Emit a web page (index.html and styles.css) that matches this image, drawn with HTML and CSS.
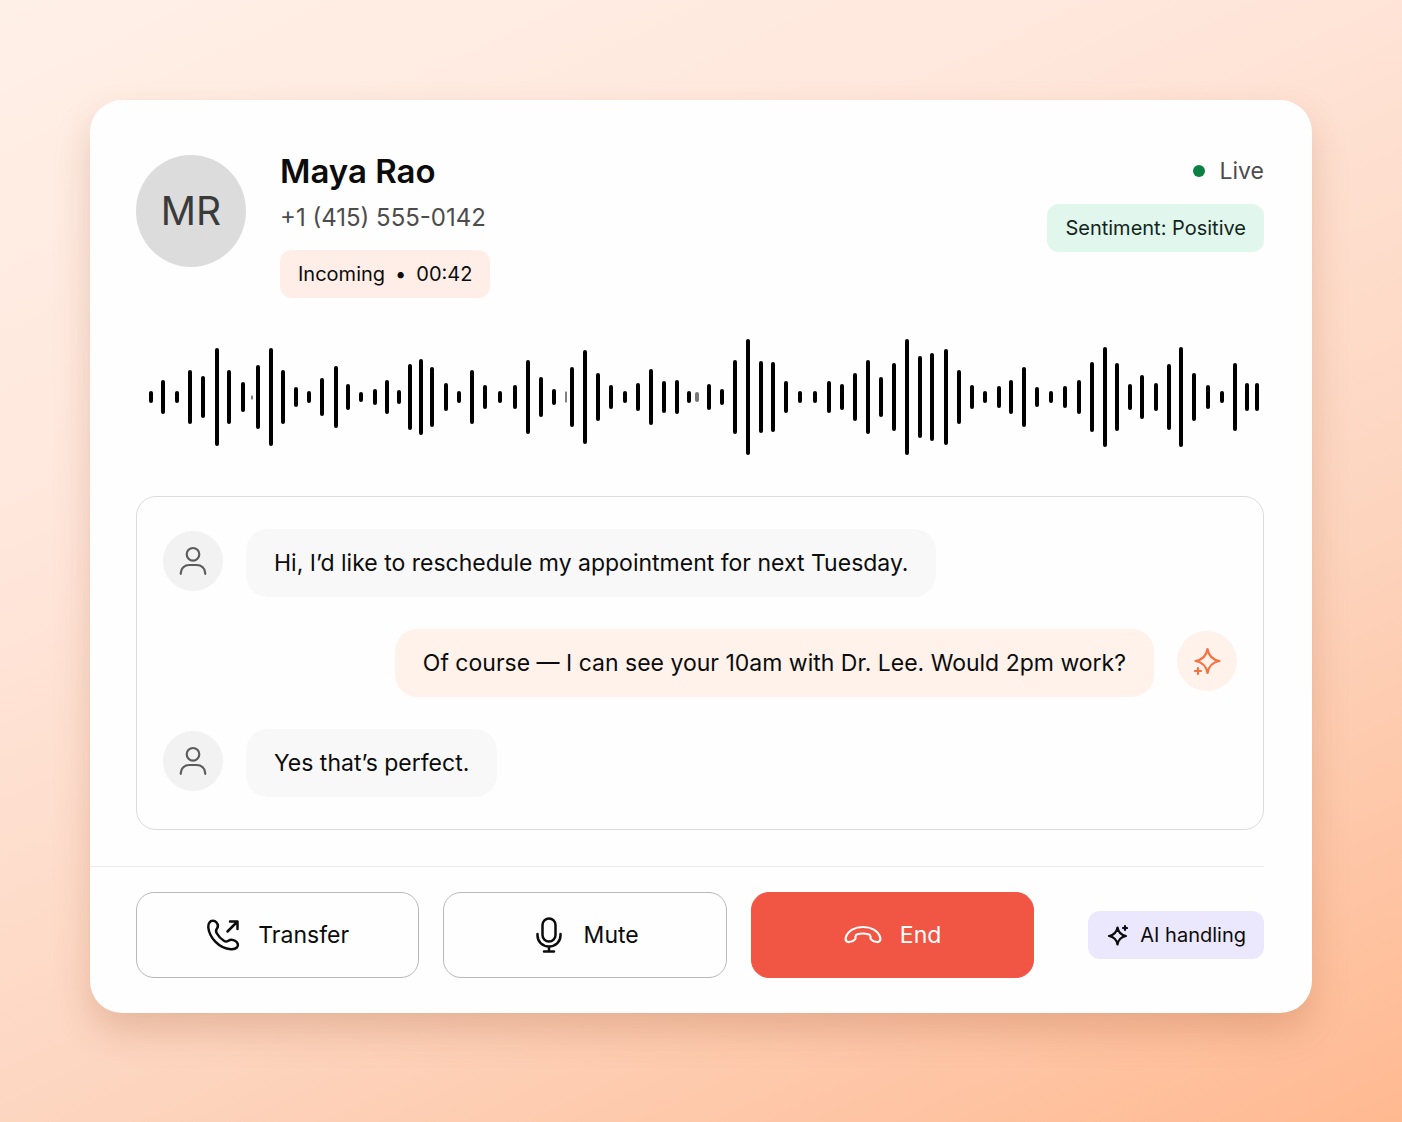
FILE: index.html
```html
<!DOCTYPE html>
<html lang="en">
<head>
    <meta charset="UTF-8">
    <meta name="viewport" content="width=device-width, initial-scale=1.0">
    <title>Call with Maya Rao</title>
    <link rel="stylesheet" href="styles.css">
</head>
<body>
    <main class="card">
        <header class="caller">
            <div class="initials">MR</div>
            <div class="caller-info">
                <h1>Maya Rao</h1>
                <p class="phone">+1 (415) 555-0142</p>
                <span class="tag incoming">Incoming <span class="sep">•</span> 00:42</span>
            </div>
            <div class="status">
                <p class="live"><span class="dot"></span>Live</p>
                <span class="tag positive">Sentiment: Positive</span>
            </div>
        </header>

        <svg class="wave" viewBox="0 0 1128 116" aria-hidden="true">
            <path id="bars" />
            <path class="thin" d="M116 57v3M430 53v10" />
            <path class="faint" d="M561 55v6" />
        </svg>

        <section class="transcript" aria-label="Transcript">
            <div class="row">
                <span class="avatar">
                    <svg width="30" height="30" viewBox="0 0 30 30"><circle cx="15" cy="8.3" r="6.3" /><path d="M2.800 27.800v-.8c0-4.800 3.700-8 8.700-8h7c5 0 8.700 3.200 8.700 8v.8" /></svg>
                </span>
                <p class="bubble">Hi, I’d like to reschedule my appointment for next Tuesday.</p>
            </div>
            <div class="row agent">
                <p class="bubble">Of course — I can see your 10am with Dr. Lee. Would 2pm work?</p>
                <span class="avatar">
                    <svg width="30" height="30" viewBox="0 0 30 30"><path d="M15.500 3c1.200 7.300 4.600 10.700 12 12-7.400 1.300-10.800 4.700-12 12-1.200-7.300-4.600-10.700-12-12 7.400-1.300 10.800-4.700 12-12z" /><path d="M6 22v6M3 25h6" /></svg>
                </span>
            </div>
            <div class="row">
                <span class="avatar">
                    <svg width="30" height="30" viewBox="0 0 30 30"><circle cx="15" cy="8.3" r="6.3" /><path d="M2.800 27.800v-.8c0-4.800 3.700-8 8.700-8h7c5 0 8.700 3.200 8.700 8v.8" /></svg>
                </span>
                <p class="bubble">Yes that’s perfect.</p>
            </div>
        </section>

        <footer class="actions">
            <button type="button">
                <svg width="34" height="34" viewBox="0 0 34 34"><path d="M3.500 4.500C5 2.300 8.600 2.200 10.300 4.300c1.800 2.200 2.300 4.100.7 6.200-1.200 1.600-1.400 2.600-.4 4.500 1.700 3.200 4.300 5.800 7.600 8 1.800 1.200 2.600.8 4.200-.3 2.300-1.600 4.500-1.300 7 .3 2.600 1.700 3.400 4.500 1.500 6.500-1.500 1.500-3.500 1.900-6 1.700C12.500 30.200 3.200 19 2.300 9.500 2.100 7.500 2.300 5.800 3.500 4.500z" /><path d="M21.500 13.500L31 4M24 3.500h7.500V11" /></svg>
                Transfer
            </button>
            <button type="button">
                <svg width="34" height="36" viewBox="0 0 34 36"><rect x="10.500" y="1.500" width="13" height="23" rx="6.500" /><path d="M5.500 17v1.500c0 6.500 5 11 11.500 11s11.500-4.500 11.500-11V17M17 29.500V34.500M12 34.500h10" /></svg>
                Mute
            </button>
            <button type="button" class="end">
                <svg width="38" height="20" viewBox="0 0 38 20"><path d="M1.800 12.500C3.800 5.500 11 2 19 2s15.200 3.500 17.200 10.500c.8 3-1 4.800-3.400 4.500-2.300-.3-4.600-1.200-5.800-2.600-.8-1-.3-2.300-.6-3.500-.2-1-.9-1.400-2-1.700-3-.8-7.800-.8-10.800 0-1.100.3-1.800.7-2 1.700-.3 1.200.2 2.500-.6 3.500-1.200 1.400-3.500 2.300-5.800 2.600-2.400.3-4.200-1.500-3.400-4.500z" /></svg>
                End
            </button>
            <span class="tag ai">
                <svg width="22" height="22" viewBox="0 0 22 22"><path d="M11.500 3.500c.9 5 3.500 7.600 8.500 8.500-5 .9-7.600 3.500-8.500 8.500-.9-5-3.500-7.600-8.500-8.500 5-.9 7.600-3.500 8.500-8.500z" /><path d="M19 2v4M17 4h4" /></svg>
                AI handling
            </span>
        </footer>
    </main>
    <script>
        // x position and half height of every bar, around the middle line
        const bars = [
            [15, 4], [27, 15], [41, 4], [54, 25], [67, 19], [81, 47], [93, 25], [107, 13],
            [122, 30], [135, 47], [147, 25], [160, 8], [173, 4], [186, 17], [200, 29], [212, 11],
            [225, 3], [239, 6], [251, 15], [263, 5], [274, 31], [285, 36], [296, 28], [310, 12],
            [323, 4], [336, 25], [349, 10], [364, 4], [379, 10], [392, 35], [405, 18], [418, 6],
            [436, 28], [449, 45], [462, 22], [475, 10], [489, 4], [502, 12], [515, 26], [528, 14],
            [541, 15], [553, 4], [573, 11], [586, 6], [599, 35], [612, 56], [625, 34], [637, 33],
            [650, 14], [664, 4], [679, 4], [693, 14], [706, 11], [719, 22], [732, 35], [745, 18],
            [758, 32], [771, 56], [784, 39], [796, 42], [810, 46], [823, 25], [836, 10], [849, 4],
            [863, 9], [875, 15], [888, 28], [901, 8], [915, 4], [929, 9], [943, 15], [956, 33],
            [969, 48], [981, 32], [994, 11], [1006, 20], [1020, 12], [1033, 31], [1045, 48],
            [1058, 22], [1072, 10], [1086, 4], [1099, 32], [1111, 12], [1121, 12]
        ];
        const d = bars.map(([x, h]) => `M${x} ${58 - h}v${h * 2}`).join("");
        document.getElementById("bars").setAttribute("d", d);
    </script>
</body>
</html>
```
FILE: styles.css
```css
* {
    box-sizing: border-box;
}
body {
    margin: 0;
    min-height: 100vh;
    padding: 100px 90px;
    background: linear-gradient(155deg, #fff0e7 0%, #ffe7dc 30%, #fdd5bf 65%, #ffb991 100%);
    font-family: Inter, "Liberation Sans", sans-serif;
    font-size: 23px;
    line-height: 32px;
    color: #0c0c0c;
}
h1, p {
    margin: 0;
}
svg {
    flex: none;
    fill: none;
    stroke: currentColor;
    stroke-width: 2.2;
    stroke-linecap: round;
    stroke-linejoin: round;
}
.card {
    background: #fefefe;
    border-radius: 32px;
    box-shadow: 0 18px 36px rgba(160, 80, 40, 0.24);
}

.caller {
    display: flex;
    padding: 51px 48px 0 46px;
}
.initials {
    display: flex;
    align-items: center;
    justify-content: center;
    width: 110px;
    height: 112px;
    margin-top: 4px;
    border-radius: 50%;
    background: #dcdcdc;
    color: #3a3a3a;
    font-size: 39px;
}
.caller-info {
    margin-left: 34px;
}
h1 {
    font-size: 33px;
    line-height: 40px;
    font-weight: 600;
}
.phone {
    margin: 11px 0 16px;
    font-size: 24px;
    color: #4c4c4c;
}
.tag {
    display: inline-flex;
    align-items: center;
    height: 48px;
    padding: 0 18px;
    border-radius: 12px;
    font-size: 20px;
    white-space: nowrap;
}
.incoming {
    background: #feeee7;
}
.sep {
    margin: 0 10px;
}
.status {
    display: flex;
    flex-direction: column;
    align-items: flex-end;
    margin-left: auto;
    padding-top: 4px;
}
.live {
    display: flex;
    align-items: center;
    margin-bottom: 17px;
    color: #4c4c4c;
}
.dot {
    width: 12px;
    height: 12px;
    margin-right: 15px;
    border-radius: 50%;
    background: #0b8043;
}
.positive {
    background: #e1f6ec;
    color: #14251d;
}

.wave {
    display: block;
    width: calc(100% - 94px);
    margin: 41px 48px 0 46px;
    stroke-width: 4;
    color: #000;
}
.wave .thin {
    stroke-width: 1;
}
.wave .faint {
    color: #777;
}

.transcript {
    display: flex;
    flex-direction: column;
    gap: 32px;
    margin: 41px 48px 36px 46px;
    padding: 32px 26px;
    border: 1px solid #dcdcdc;
    border-radius: 20px;
}
.row {
    display: flex;
    align-items: flex-start;
    gap: 23px;
}
.agent {
    justify-content: flex-end;
}
.avatar {
    display: flex;
    flex: none;
    align-items: center;
    justify-content: center;
    width: 60px;
    height: 60px;
    margin-top: 2px;
    border-radius: 50%;
    background: #f2f2f2;
    color: #5c5c5c;
}
.bubble {
    padding: 18px 28px;
    border-radius: 22px;
    background: #f8f8f8;
}
.agent .bubble, .agent .avatar {
    background: #fff2eb;
}
.agent .avatar {
    color: #f47340;
}

.actions {
    display: grid;
    grid-template-columns: 1fr 1fr 1fr auto;
    align-items: center;
    gap: 24px;
    margin-right: 48px;
    padding: 25px 0 35px 46px;
    border-top: 1px solid #ececec;
}
button {
    display: flex;
    align-items: center;
    justify-content: center;
    gap: 18px;
    height: 86px;
    border: 1px solid #b8b8b8;
    border-radius: 18px;
    background: #fefefe;
    color: inherit;
    font: inherit;
    cursor: pointer;
}
button svg {
    stroke-width: 2.5;
}
button.end {
    border-color: #f15645;
    background: #f15645;
    color: #fff;
}
button.end svg {
    stroke-width: 2.2;
}
.ai {
    gap: 12px;
    margin-left: 30px;
    background: #ebe7fc;
}
```
